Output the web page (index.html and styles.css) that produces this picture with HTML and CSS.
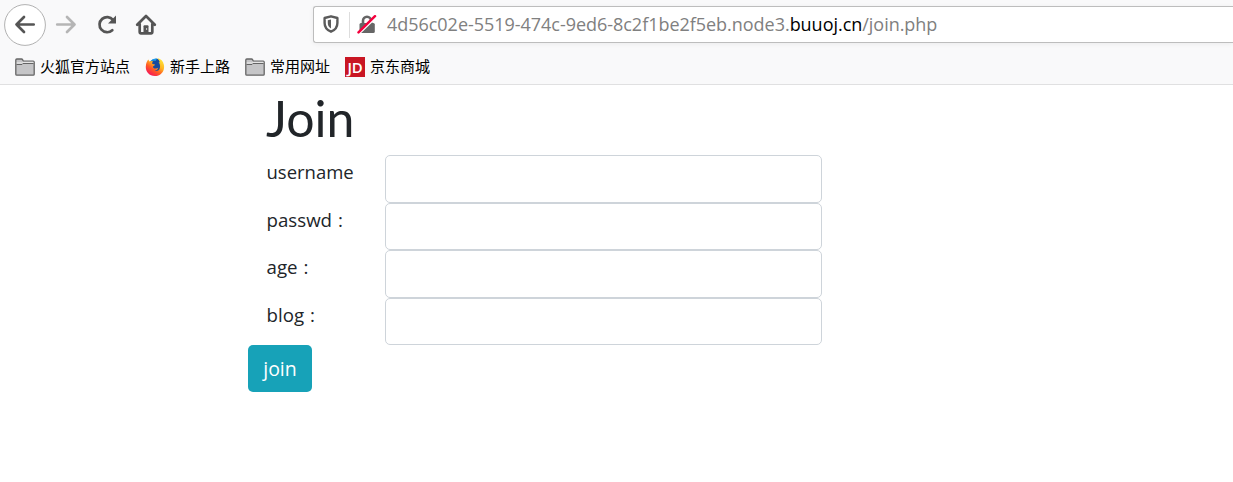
FILE: index.html
```html
<!DOCTYPE html>
<html lang="zh-CN">
<head>
<meta charset="utf-8">
<title>Join</title>
<link rel="stylesheet" href="styles.css">
</head>
<body>
<header class="chrome">
  <div class="toolbar">
    <div class="nav">
      <span class="back"><svg width="42" height="42" viewBox="0 0 42 42"><circle cx="21" cy="21" r="20.4" fill="#fff" stroke="#b1b1b1"/><path d="M29.700 20.500H12.500M20 13l-7.500 7.500 7.500 7.500" class="stroke"/></svg></span>
      <svg class="forward" width="22" height="22" viewBox="0 0 22 22"><path d="M2.200 10.500h17M12 3l7.500 7.500-7.500 7.500" class="stroke pale"/></svg>
      <svg class="reload" width="22" height="22" viewBox="0 0 22 22"><path d="M16.300 16.200A7.600 7.600 0 1 1 17 5.800" class="stroke"/><path d="M20 1.500v8h-8z" fill="#555"/></svg>
      <svg class="home" width="22" height="22" viewBox="0 0 22 22"><path d="M2.200 10.800L11 2l8.800 8.800M4.700 10v8.300q0 1 1 1h10.600q1 0 1-1V10" class="stroke"/><path d="M8.500 18.500v-6.200q0-1 1-1h3q1 0 1 1v6.200z" fill="#555"/><path d="M11.600 14v2" stroke="#ccc"/></svg>
    </div>
    <div class="address">
      <svg class="shield" width="16" height="18" viewBox="0 0 16 18"><path d="M8 1.300L14.400 3v5c0 4-2.300 7-6.400 8.700C3.900 15 1.600 12 1.600 8V3z" fill="none" stroke="#5b5b5b" stroke-width="2.400" stroke-linejoin="round"/><path d="M8 4.500v9C5.500 12 4.800 10 4.800 8V5.300z" fill="#5b5b5b"/></svg>
      <span class="divider"></span>
      <svg class="lock" width="20" height="20" viewBox="0 0 20 20"><path d="M6 10V5.700a4 4 0 0 1 8 0V10" fill="none" stroke="#666" stroke-width="2.600"/><rect x="2.500" y="8" width="15.300" height="10" rx="1.500" fill="#666"/><path d="M1.200 19L20 1" stroke="#fff" stroke-width="2.500"/><path d="M1.500 17.300L18 1.200" stroke="#f4013d" stroke-width="2.500" stroke-linecap="round"/></svg>
      <div class="url"><span class="sub">4d56c02e-5519-474c-9ed6-8c2f1be2f5eb.node3.</span><span class="domain">buuoj.cn</span><span class="path">/join.php</span></div>
    </div>
  </div>
  <nav class="bookmarks">
    <span class="bookmark"><svg width="20" height="20" viewBox="0 0 20 20"><path d="M.8 17.200V3q0-1 1-1h4.700q.8 0 1.200.9l.7 1.300h9.800q1 0 1 1v12q0 1-1 1H1.800q-1 0-1-1z" fill="#c5c5c7" stroke="#656565" stroke-width="1.300"/><path d="M1.500 7.500h5.500l1-1h10.500" fill="none" stroke="#656565"/><path d="M1.700 6h5l.8-.7h11" fill="none" stroke="#eee"/></svg><span class="name">火狐官方站点</span></span>
    <span class="bookmark"><svg width="20" height="20" viewBox="0 0 20 20">
      <defs><linearGradient id="fire" x1=".9" y1="0" x2=".2" y2="1"><stop offset="0" stop-color="#fff13f"/><stop offset=".4" stop-color="#ffb321"/><stop offset=".65" stop-color="#ff5a24"/><stop offset="1" stop-color="#f40b62"/></linearGradient></defs>
      <g transform="translate(.3 .8) scale(.96)"><circle cx="11" cy="8.700" r="7.600" fill="#174b9e"/><path d="M5.500 3Q9 0 13 .8q-2 .8-2 2.200z" fill="#1a9dec"/>
      <path d="M1.500 4.500L3 1.800l1.500 2Q6.500 3 8 3.500 6.700 5 7.500 6.500l2.600.6Q10 8.300 8 9q0 2.200 2.800 2.200 1.600-.1 2.800-.8-.8 2.700-3.800 3.200 4.700.7 5.400-3.300.7-3.300-1.300-5.800l1.400.5Q14.500 2.500 12.500.3 18.300 1.800 19.300 7c1.500 7-3.300 12-9.300 12S.3 14.500.5 9.300Q.6 6.500 1.500 4.500z" fill="url(#fire)"/></g></svg><span class="name">新手上路</span></span>
    <span class="bookmark"><svg width="20" height="20" viewBox="0 0 20 20"><path d="M.8 17.200V3q0-1 1-1h4.700q.8 0 1.200.9l.7 1.300h9.800q1 0 1 1v12q0 1-1 1H1.800q-1 0-1-1z" fill="#c5c5c7" stroke="#656565" stroke-width="1.300"/><path d="M1.500 7.500h5.500l1-1h10.500" fill="none" stroke="#656565"/><path d="M1.700 6h5l.8-.7h11" fill="none" stroke="#eee"/></svg><span class="name">常用网址</span></span>
    <span class="bookmark"><span class="jd">JD</span><span class="name">京东商城</span></span>
  </nav>
</header>
<main class="page">
  <h1>Join</h1>
  <form>
    <div class="row"><label for="username" class="wide">username</label><input id="username" type="text"></div>
    <div class="row"><label for="passwd">passwd :</label><input id="passwd" type="password"></div>
    <div class="row"><label for="age">age :</label><input id="age" type="text"></div>
    <div class="row"><label for="blog">blog :</label><input id="blog" type="text"></div>
    <button type="button">join</button>
  </form>
</main>
</body>
</html>
```

FILE: styles.css
```css
* { box-sizing: border-box; }
body {
  margin: 0;
  height: 482px;
  overflow: hidden;
  background: #fff;
  color: #212529;
  font-family: "Open Sans", "Noto Sans CJK SC", sans-serif;
}
svg { display: block; flex: none; }
.chrome { height: 85px; background: #f9f9fa; border-bottom: 1px solid #e0e0e1; }
.toolbar { display: flex; height: 49px; align-items: center; }
.nav { display: flex; width: 313px; padding-left: 4px; align-items: center; }
.forward { margin-left: 9px; }
.reload { margin-left: 19px; }
.home { margin-left: 17px; }
.stroke { fill: none; stroke: #555; stroke-width: 2.7; stroke-linecap: round; stroke-linejoin: round; }
.pale { stroke: #b5b5b5; }
.address {
  display: flex;
  flex: 1;
  align-items: center;
  height: 37px;
  padding-left: 9px;
  background: #fff;
  border: 1px solid #bdbdbd;
  border-right: 0;
  border-radius: 3px 0 0 3px;
  box-shadow: 0 1px 5px rgba(0, 0, 0, .06);
}
.shield { margin-bottom: 2px; }
.divider { width: 1px; height: 26px; margin: 0 7px 0 10px; background: #ddd; }
.url { display: flex; margin-left: 10px; padding-bottom: 2px; font-size: 18px; line-height: 28px; letter-spacing: -.03px; white-space: nowrap; color: #808080; }
.domain { color: #000; }
.bookmarks { display: flex; gap: 15px; padding: 8px 0 0 15px; height: 35px; }
.bookmark { display: flex; height: 20px; gap: 5px; align-items: center; font: 15px/20px "Noto Sans CJK SC", sans-serif; color: #000; white-space: nowrap; }
.name { padding-bottom: 2px; }
.jd { width: 20px; height: 20px; background: #c91623; color: #fff; font: 600 15px/20px "Open Sans", sans-serif; letter-spacing: -.3px; text-align: center; }
.page { width: 574px; margin-left: 248px; }
h1 { margin: 0; padding: 3px 0 0 18px; height: 70px; font: 400 50px/60px Lato, "Open Sans", sans-serif; }
.row { display: flex; height: 47.5px; }
label { width: 137px; padding: 2px 0 0 18.5px; font-size: 18.7px; line-height: 30px; word-spacing: 1px; }
.wide { font-size: 18.5px; }
input { width: 437px; height: 47.5px; padding: 7px 15px; border: 1px solid #ced4da; border-radius: 5px; background: #fff; font: inherit; }
button { display: block; width: 64px; height: 47px; padding: 1px 0 0; border: 0; border-radius: 5px; background: #17a2b8; color: #fff; font: 19.5px/46px "Open Sans", sans-serif; }
```
